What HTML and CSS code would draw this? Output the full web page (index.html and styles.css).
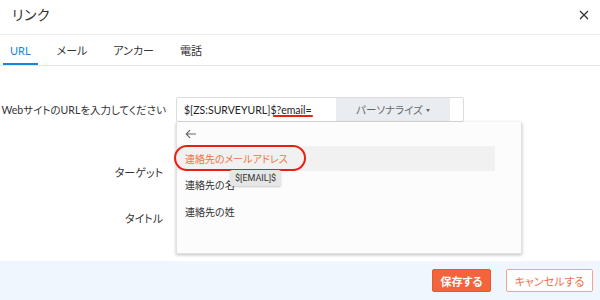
FILE: index.html
```html
<!DOCTYPE html>
<html lang="ja">
<head>
<meta charset="utf-8">
<link rel="stylesheet" href="styles.css">
</head>
<body>
<div class="dialog">
  <div class="header">
    <span class="title">リンク</span>
    <span class="close">
      <svg width="10" height="10" viewBox="0 0 10 10"><path d="M1 1L9 9M9 1L1 9" stroke="#333" stroke-width="1.3" fill="none"/></svg>
    </span>
  </div>
  <div class="tabs">
    <div class="tab active">URL</div>
    <div class="tab">メール</div>
    <div class="tab">アンカー</div>
    <div class="tab">電話</div>
  </div>
  <div class="body">
    <div class="row row-url">
      <div class="label">WebサイトのURLを入力してください</div>
      <div class="field">
        <div class="inputbox">
          <div class="input">$[ZS:SURVEYURL]$?email=</div>
          <div class="personalize">パーソナライズ <span class="caret"></span></div>
        </div>
        <span class="mark-underline"></span>
        <div class="dropdown">
          <div class="back">
            <svg width="12" height="10" viewBox="0 0 12 10"><path d="M11 5H1.5M5 1.2L1.2 5L5 8.8" stroke="#666" stroke-width="1.1" fill="none"/></svg>
          </div>
          <div class="item hl">連絡先のメールアドレス</div>
          <div class="item">連絡先の名</div>
          <div class="item">連絡先の姓</div>
          <span class="mark-ellipse"></span>
          <span class="tooltip">$[EMAIL]$</span>
        </div>
      </div>
    </div>
    <div class="row row-target">
      <div class="label">ターゲット</div>
    </div>
    <div class="row row-title">
      <div class="label">タイトル</div>
    </div>
  </div>
  <div class="footer">
    <button class="btn save">保存する</button>
    <button class="btn cancel">キャンセルする</button>
  </div>
</div>
</body>
</html>
```

FILE: styles.css
```css
* { box-sizing: border-box; }
html, body { margin: 0; padding: 0; background: #fff; }
body {
  font-family: "Lato", "Noto Sans CJK JP", sans-serif;
  color: #333;
  width: 600px;
  height: 300px;
  overflow: hidden;
  font-feature-settings: "palt";
}
.dialog { width: 600px; height: 300px; display: flex; flex-direction: column; }
.header {
  height: 35px;
  border-bottom: 1px solid #ececec;
  display: flex;
  align-items: center;
  justify-content: space-between;
  padding: 0 12px 6px 12px;
}
.title { font-size: 14px; color: #333; letter-spacing: 0.5px; }
.close { display: flex; margin-right: -1px; margin-top: 1px; }
.tabs {
  height: 31px;
  border-bottom: 1px solid #e6e6e6;
  display: flex;
  padding-left: 3px;
}
.tab {
  font-size: 11px;
  color: #333;
  padding: 0 7px;
  margin-right: 12px;
  display: flex;
  align-items: center;
  border-bottom: 2px solid transparent;
  padding-top: 2px;
}
.tab.active { color: #1a84d8; border-bottom-color: #1a84d8; }
.body {
  flex: 1;
  padding-top: 31px;
}
.row { display: flex; align-items: center; }
.label {
  flex: none;
  width: 166px;
  text-align: right;
  font-size: 11px;
  color: #333;
  margin-right: 10px;
  white-space: nowrap;
}
.row-url .label { font-size: 10.5px; }
.row-target .label, .row-title .label { width: 163px; margin-right: 13px; }
.row-url { height: 25px; }
.row-target { height: 25px; margin-top: 37px; }
.row-title { height: 25px; margin-top: 21px; }
.field { position: relative; flex: none; }
.inputbox {
  width: 288px;
  height: 25px;
  border: 1px solid #dcdcdc;
  border-radius: 2px;
  display: flex;
  background: #fff;
}
.input {
  width: 159px;
  font-size: 10.5px;
  color: #222;
  padding-left: 7px;
  display: flex;
  align-items: center;
  white-space: nowrap;
}
.personalize {
  width: 114px;
  background: #e9edf2;
  font-size: 10.5px;
  color: #666;
  display: flex;
  align-items: center;
  justify-content: center;
  gap: 3px;
}
.caret {
  width: 0; height: 0;
  border-left: 2.5px solid transparent;
  border-right: 2.5px solid transparent;
  border-top: 3px solid #666;
  margin-top: 1px;
}
.mark-underline {
  position: absolute;
  left: 97px;
  top: 18px;
  width: 40px;
  height: 2px;
  background: #e8200e;
  border-radius: 1px;
}
.dropdown {
  position: absolute;
  left: 0;
  top: 25px;
  width: 346px;
  height: 132px;
  background: #fcfcfc;
  border: 1px solid #e0e0e0;
  border-top: none;
  box-shadow: 0 1px 3px rgba(0,0,0,0.25);
}
.back { height: 24px; display: flex; align-items: center; padding-left: 8px; }
.item {
  height: 27px;
  width: 318px;
  font-size: 10px;
  color: #333;
  display: flex;
  align-items: center;
  padding-left: 8px;
  white-space: nowrap;
}
.item.hl { background: #f1f1f1; color: #f0743e; height: 25px; }
.mark-ellipse {
  position: absolute;
  left: -3px;
  top: 23px;
  width: 132px;
  height: 26px;
  border: 2.5px solid #e8200e;
  border-radius: 14px;
}
.tooltip {
  position: absolute;
  left: 53px;
  top: 48px;
  height: 16px;
  padding: 0 5px;
  background: #e6e6e6;
  font-size: 9px;
  color: #333;
  display: flex;
  align-items: center;
  border-radius: 2px;
  box-shadow: 0 1px 2px rgba(0,0,0,0.2);
  font-family: "Roboto", "Noto Sans", sans-serif;
}
.footer {
  height: 39px;
  background: #eff6fd;
  display: flex;
  align-items: center;
  justify-content: flex-end;
  padding-right: 7px;
  gap: 15px;
}
.btn {
  height: 23px;
  font-family: "Lato", "Noto Sans CJK JP", sans-serif;
  font-size: 11px;
  border-radius: 2px;
  padding: 0;
  font-feature-settings: "palt";
}
.save {
  width: 59px;
  background: #f4643c;
  border: 1px solid #e9572f;
  color: #fff;
  font-weight: bold;
}
.cancel {
  width: 87px;
  background: #fff;
  border: 1px solid #f6a48f;
  color: #f0704e;
}
```
